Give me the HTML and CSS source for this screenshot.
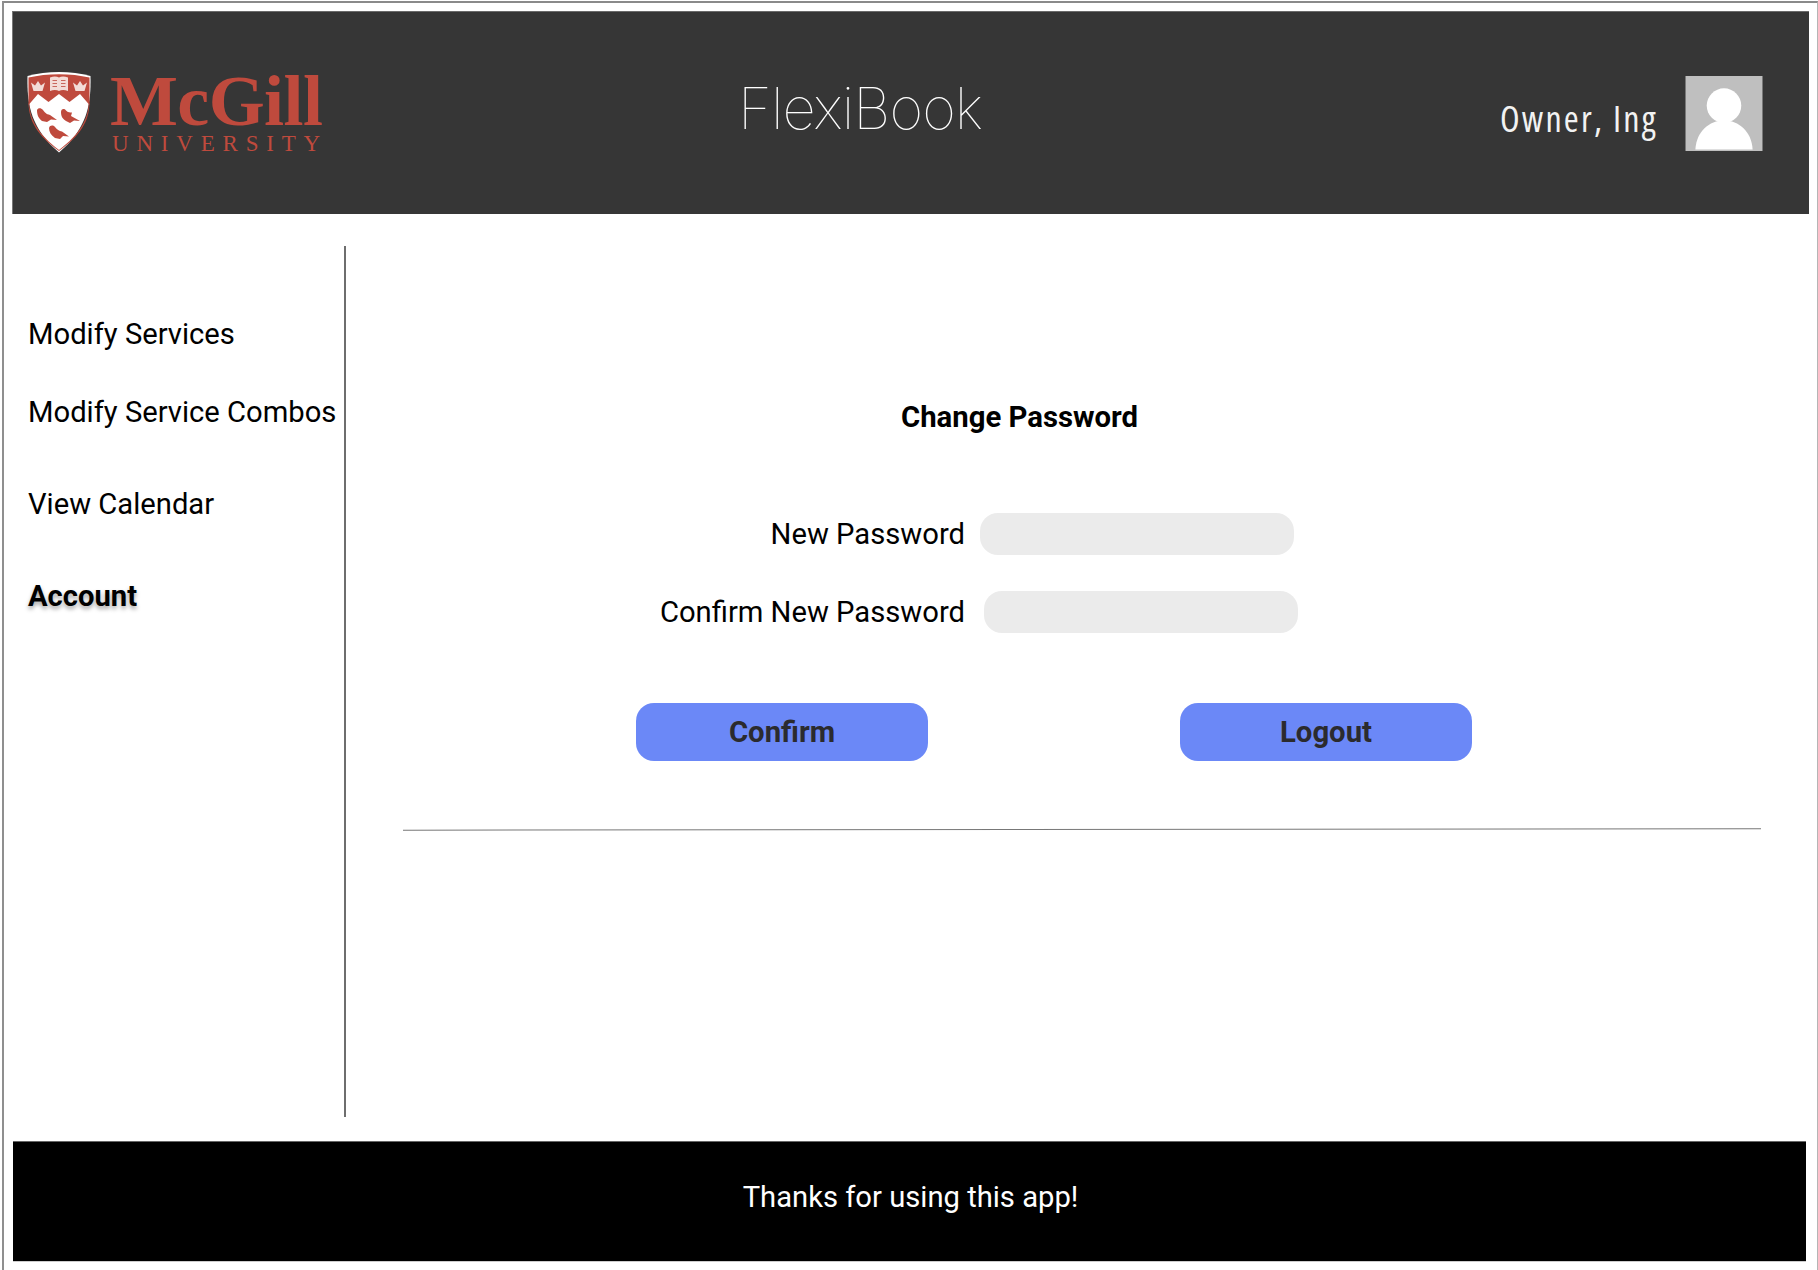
FILE: index.html
```html
<!DOCTYPE html>
<html lang="en">
<head>
<meta charset="utf-8">
<title>FlexiBook</title>
<link rel="stylesheet" href="styles.css">
</head>
<body>
<div class="frame">
  <header class="header">
    <div class="brand">
      <svg class="shield" viewBox="0 0 64 82" width="64" height="82" aria-hidden="true">
        <path d="M0.5 5C20 -0.5 44 -0.5 63.5 5C64 30 62 56 32 81.5C2 56 0 30 0.5 5Z" fill="#fff"/>
        <path d="M1.5 6.500C20 2 44 2 62.500 6.500L62.500 34L53 23L42.500 31L32 23L21.500 31L11 23L1.500 34Z" fill="#bf4a3d"/>
        <path d="M1.500 32C2 50 10 64 32 80C54 64 62 50 62.500 32L61.800 33C60.500 49 53 63 32 79C11 63 3.500 49 2.200 33Z" fill="#bf4a3d"/>
        <path d="M23 6.500C27 5 30 5.500 32 6.500C34 5.500 37 5 41 6.500V20C37 18.500 34 19 32 20C30 19 27 18.500 23 20Z" fill="#f3dcd7"/>
        <path d="M25.500 9.500H30M25.500 12.500H30M25.500 15.500H30M34 9.500H38.500M34 12.500H38.500M34 15.500H38.500" stroke="#c9675c" stroke-width="1"/>
        <path d="M4 11.500L8 14.500L11 10L14 14.500L18 11.500L15.500 20H6.500Z" fill="#f3dcd7"/>
        <path d="M46 11.500L50 14.500L53 10L56 14.500L60 11.500L57.500 20H48.500Z" fill="#f3dcd7"/>
        <path d="M10 39C11 36.500 14 36.500 16 39C18 41.500 19 43 23 44L30 49L24 48.500L20 51L15 50C11 47 10 43 10 39Z" fill="#bf4a3d"/>
        <path d="M34 41C34 38 37 37 39 39.500C41 41.500 43 41.500 45 41.500L44 45L53 50L47 49.500L43 52L39 50C35 47.500 34 44.500 34 41Z" fill="#bf4a3d"/>
        <path d="M22 57C23 54 26 54 28 56C30 58.500 32 60 35 60.500L42 65.500L36 65L33 68L28 67C24 64 22 61 22 57Z" fill="#bf4a3d"/>
      </svg>
      <div class="wordmark">
        <div class="wordmark-name">McGill</div>
        <div class="wordmark-sub">UNIVERSITY</div>
      </div>
    </div>
    <h1 class="app-title">FlexiBook</h1>
    <div class="user">
      <span class="user-name">Owner, Ing</span>
      <svg class="avatar" viewBox="0 0 78 76" width="78" height="75" aria-hidden="true">
        <rect width="78" height="76" fill="#bfbfbf"/>
        <circle cx="39" cy="30" r="17.500" fill="#fff"/>
        <path d="M10 74.500C11 56 24 45 39 45C54 45 67 56 68 74.500Z" fill="#fff"/>
      </svg>
    </div>
  </header>

  <div class="main">
    <nav class="sidebar">
      <a class="nav-item nav-item-a">Modify Services</a>
      <a class="nav-item nav-item-b">Modify Service Combos</a>
      <a class="nav-item nav-item-b">View Calendar</a>
      <a class="nav-item nav-active">Account</a>
    </nav>
    <section class="content">
      <h2 class="form-title">Change Password</h2>
      <div class="field">
        <label class="field-label">New Password</label>
        <div class="field-input"></div>
      </div>
      <div class="field field-second">
        <label class="field-label">Confirm New Password</label>
        <div class="field-input"></div>
      </div>
      <div class="actions">
        <button class="btn" type="button">Confirm</button>
        <button class="btn" type="button">Logout</button>
      </div>
      <hr class="rule">
    </section>
  </div>

  <footer class="footer">Thanks for using this app!</footer>
</div>
</body>
</html>
```
FILE: styles.css
```css
* { box-sizing: border-box; }
html, body { margin: 0; padding: 0; background: #fff; }
body { font-family: Roboto, "Liberation Sans", sans-serif; color: #000; }

.frame {
  width: 1816px;
  height: 1269px;
  margin: 1px 0 0 2px;
  padding: 8px 0 0;
  border-top: 2px solid #8a8a8a;
  border-left: 2px solid #8f8f8f;
  border-right: 1px solid #b5b5b5;
  overflow: hidden;
}

.header {
  width: 1797px;
  height: 203px;
  margin-left: 8px;
  background: #363636;
  border-top: 1px solid #6a6a6a;
  border-left: 1px solid #777;
  display: flex;
  align-items: flex-start;
}

.brand { width: 725px; padding: 59px 0 0 14px; display: flex; gap: 19px; flex: none; }
.shield { flex: none; }
.wordmark { color: #bf4a3d; font-family: "Liberation Serif", serif; }
.wordmark-name { font-size: 72px; line-height: 64px; font-weight: 700; letter-spacing: -.6px; margin-top: -2px; }
.wordmark-sub { font-size: 23px; line-height: 24px; letter-spacing: 7.800px; margin: -1px 0 0 2px; font-weight: 400; }

.app-title {
  margin: 60px 0 0;
  width: 520px;
  font-family: Inter, sans-serif;
  font-weight: 100;
  font-size: 58px;
  letter-spacing: -.9px;
  line-height: 72px;
  color: #fff;
}

.user { margin-left: auto; padding: 64px 46px 0 0; display: flex; gap: 27px; }
.user-name {
  font-family: "Open Sans", sans-serif;
  font-stretch: 75%;
  font-size: 36px;
  letter-spacing: 2.200px;
  line-height: 86px;
  color: #f2f2f2;
  display: block;
  width: 158px;
  white-space: nowrap;
}
.avatar { display: block; flex: none; }

.main { display: flex; height: 927px; margin-left: 8px; padding-top: 32px; }

.sidebar {
  width: 334px;
  height: 871px;
  border-right: 2px solid #6e6e6e;
  padding: 71px 0 0 16px;
  display: flex;
  flex-direction: column;
  flex: none;
}
.nav-item { font-size: 29.200px; line-height: 34px; white-space: nowrap; color: #000; }
.nav-item-a { margin-bottom: 44px; }
.nav-item-b { margin-bottom: 58px; }
.nav-active { font-weight: 700; text-shadow: 0 3px 4px rgba(0, 0, 0, .35); }

.content { flex: 1; padding-top: 154px; }

.form-title {
  margin: 0 0 79px 555px;
  width: 240px;
  font-size: 29.300px;
  line-height: 34px;
  font-weight: 700;
  white-space: nowrap;
}

.field { display: flex; align-items: center; height: 42px; margin-bottom: 36px; padding-left: 275px; gap: 15px; }
.field-second { gap: 19px; margin-bottom: 70px; }
.field-label { width: 344px; text-align: right; font-size: 29.200px; line-height: 34px; white-space: nowrap; flex: none; }
.field-input { width: 314px; height: 42px; background: #ebebeb; border-radius: 18px; flex: none; }

.actions { display: flex; gap: 252px; padding-left: 290px; }
.btn {
  width: 292px;
  height: 58px;
  padding: 0;
  border: 0;
  border-radius: 18px;
  background: #6b88f7;
  color: #2b2b2e;
  font-family: Roboto, sans-serif;
  font-size: 29.300px;
  font-weight: 700;
}

.rule {
  width: 1358px;
  height: 1px;
  margin: 68px 0 0 57px;
  border: 0;
  background: #777;
  transform: rotate(-0.06deg);
}

.footer {
  width: 1793px;
  height: 121px;
  margin-left: 9px;
  background: #000;
  border-top: 1px solid #666;
  border-bottom: 1px solid #ccc;
  color: #fff;
  font-size: 29.200px;
  line-height: 110px;
  text-align: center;
  padding-left: 2px;
}
```
